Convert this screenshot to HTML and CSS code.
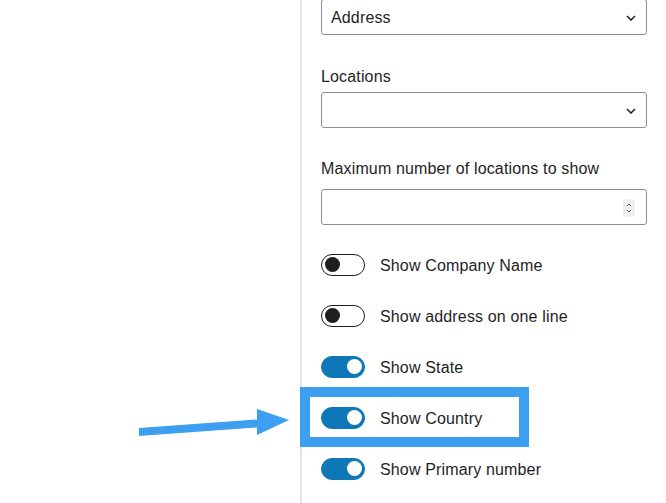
FILE: index.html
```html
<!DOCTYPE html>
<html lang="en">
<head>
    <meta charset="UTF-8">
    <title>Block settings</title>
    <link rel="stylesheet" href="styles.css">
</head>
<body>
    <div class="page">
        <div class="canvas"></div>

        <div class="sidebar">
            <div class="select select-first">
                <span>Address</span>
                <svg class="chevron" width="10" height="6" viewBox="0 0 10 6"><path d="M1 1l4 4 4-4" fill="none" stroke="#1e1e1e" stroke-width="1.5"/></svg>
            </div>

            <label class="field-label label-locations">Locations</label>
            <div class="select">
                <span></span>
                <svg class="chevron" width="10" height="6" viewBox="0 0 10 6"><path d="M1 1l4 4 4-4" fill="none" stroke="#1e1e1e" stroke-width="1.5"/></svg>
            </div>

            <label class="field-label label-max">Maximum number of locations to show</label>
            <div class="select number">
                <span></span>
                <span class="spinner">
                    <svg width="6" height="12" viewBox="0 0 6 12">
                        <path d="M1 4l2-2 2 2M1 8l2 2 2-2" fill="none" stroke="#555" stroke-width="1"/>
                    </svg>
                </span>
            </div>

            <div class="toggles">
                <div class="toggle-row">
                    <span class="toggle"><span class="knob"></span></span>
                    <span class="toggle-label">Show Company Name</span>
                </div>
                <div class="toggle-row">
                    <span class="toggle"><span class="knob"></span></span>
                    <span class="toggle-label">Show address on one line</span>
                </div>
                <div class="toggle-row">
                    <span class="toggle is-on"><span class="knob"></span></span>
                    <span class="toggle-label">Show State</span>
                </div>
                <div class="toggle-row">
                    <span class="toggle is-on"><span class="knob"></span></span>
                    <span class="toggle-label">Show Country</span>
                </div>
                <div class="toggle-row">
                    <span class="toggle is-on"><span class="knob"></span></span>
                    <span class="toggle-label">Show Primary number</span>
                </div>
            </div>
        </div>
    </div>

    <!-- annotation drawn over the screenshot -->
    <div class="highlight"></div>
    <svg class="arrow" width="170" height="45" viewBox="0 0 170 45">
        <polygon points="9,28 127,19.5 127,9 159,20 127,35 127,27.5 9,36" fill="#3c9ff0"/>
    </svg>
</body>
</html>
```

FILE: styles.css
```css
* {
    box-sizing: border-box;
}

body {
    margin: 0;
    background: #fff;
    color: #1e1e1e;
    font-family: "Liberation Sans", Arial, sans-serif;
    font-size: 16px;
    letter-spacing: 0.15px;
    overflow: hidden;
}

.page {
    display: flex;
    height: 503px;
}

.canvas {
    width: 300px;
    flex-shrink: 0;
}

.sidebar {
    flex: 1;
    border-left: 2px solid #e4e4e4;
    padding: 0 19px;
    display: flex;
    flex-direction: column;
}

.select {
    height: 36px;
    border: 1px solid #8d8d8d;
    border-radius: 3px;
    display: flex;
    align-items: center;
    justify-content: space-between;
    padding: 1px 10px 0 9px;
    line-height: 20px;
}

.select-first {
    margin-top: -1px;
}

.chevron {
    display: block;
}

.number {
    padding-right: 11px;
}

.spinner {
    width: 12px;
    height: 18px;
    border-radius: 4px;
    background: #efefef;
    display: flex;
    align-items: center;
    justify-content: center;
}

.spinner svg {
    display: block;
}

.field-label {
    display: block;
    line-height: 20px;
}

.label-locations {
    margin: 32px 0 5px;
}

.label-max {
    margin: 31px 0 10px;
}

.toggles {
    display: flex;
    flex-direction: column;
    gap: 29px;
    margin-top: 29px;
}

.toggle-row {
    display: flex;
    align-items: center;
    height: 22px;
}

.toggle {
    position: relative;
    width: 44px;
    height: 22px;
    border-radius: 11px;
    border: 1.5px solid #1e1e1e;
    background: #fff;
    flex-shrink: 0;
}

.knob {
    position: absolute;
    top: 2px;
    left: 2.5px;
    width: 15px;
    height: 15px;
    border-radius: 50%;
    background: #1e1e1e;
}

.toggle.is-on {
    background: #0d77b7;
    border-color: #0d77b7;
}

.toggle.is-on .knob {
    left: auto;
    right: 2.5px;
    background: #fff;
}

.toggle-label {
    margin-left: 15px;
    padding-top: 2px;
    line-height: 20px;
}

.highlight {
    position: absolute;
    left: 300px;
    top: 387px;
    width: 229px;
    height: 60px;
    border: 10px solid #3c9ff0;
}

.arrow {
    position: absolute;
    left: 130px;
    top: 400px;
}
```
